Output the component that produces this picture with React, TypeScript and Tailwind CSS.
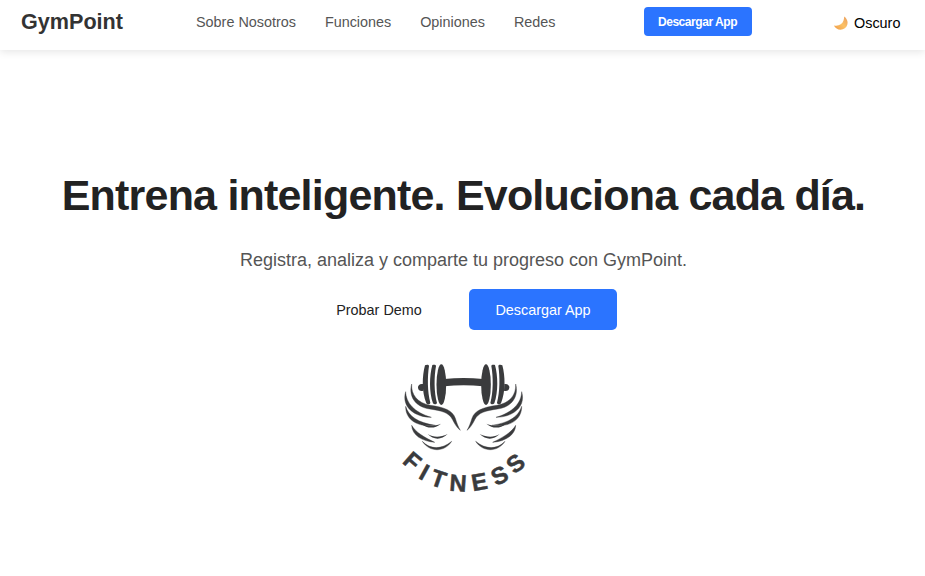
const letters = [
  { c: 'F', x: 52, y: 318, r: 41 },
  { c: 'I', x: 88, y: 351, r: 29 },
  { c: 'T', x: 131, y: 371, r: 19 },
  { c: 'N', x: 189, y: 384, r: 4 },
  { c: 'E', x: 253, y: 380, r: -10 },
  { c: 'S', x: 313, y: 361, r: -26 },
  { c: 'S', x: 361, y: 325, r: -40 },
];

function Half() {
  return (
    <g>
      <path d="M84 87C74 85 68 92 69 98C70 106 77 110 85 107Z" />
      <path d="M90 31C95 28 102 29 102 33C97 65 97 112 106 143C105 149 97 149 94 145C80 111 81 64 90 31Z" />
      <path d="M112 30C117 28 123 29 123 33C117 65 117 112 126 144C124 149 117 149 114 145C102 111 103 63 112 30Z" />
      <ellipse cx="139" cy="89" rx="14.5" ry="61" />
      <g stroke="#3a3b3d" strokeWidth="1.2" strokeLinejoin="round">
        <path d="M50 87C48 119 67 144 106 151C148 157 173 166 181 190C185 203 190 217 196 226C185 218 179 206 172 193C162 173 140 167 104 162C61 156 40 124 50 87Z" />
        <path d="M32 110C33 143 57 172 109 187C61 187 18 157 32 110Z" />
        <path d="M32 154C41 184 68 203 121 211C69 218 31 195 32 154Z" />
        <path d="M50 211C62 232 88 247 119 262C82 259 51 241 50 211Z" />
        <path d="M82 259C107 285 141 283 170 259C149 292 104 293 82 259Z" />
      </g>
      <path d="M78 206C99 214 116 214 138 206C118 222 98 221 78 206Z" />
      <path d="M98 237C116 248 135 248 158 237C138 256 116 255 98 237Z" />
    </g>
  );
}

function FitnessLogo() {
  return (
    <svg className="h-[145px] w-[140px]" viewBox="0 0 420 435" fill="#3a3b3d" role="img" aria-label="Fitness">
      <Half />
      <g transform="translate(412 0) scale(-1 1)">
        <Half />
      </g>
      <path d="M148 72Q206 66 264 72V94Q206 87 148 94Z" />
      {letters.map((l, i) => (
        <text
          key={i}
          transform={`translate(${l.x} ${l.y}) rotate(${l.r})`}
          y="25"
          textAnchor="middle"
          stroke="#3a3b3d"
          strokeWidth="1.5"
          className="font-['Liberation_Sans',sans-serif] text-[71px] font-bold"
        >
          {l.c}
        </text>
      ))}
    </svg>
  );
}

function Moon() {
  return (
    <svg className="h-4 w-4" viewBox="0 0 16 16">
      <defs>
        <linearGradient id="moon" x1="0" y1="1" x2="1" y2="0">
          <stop offset="0" stopColor="#ef9a45" />
          <stop offset=".5" stopColor="#fcc267" />
          <stop offset="1" stopColor="#e99d5f" />
        </linearGradient>
      </defs>
      <path d="M11.2 1.4C16.3 5 15.5 12.3 9.8 14.3C6.4 15.4 2.5 14 .9 10.5C5.3 11.5 9.3 9.5 10.5 5.6C10.9 4.2 11.2 2.8 11.2 1.4Z" fill="url(#moon)" />
    </svg>
  );
}

export default function App() {
  return (
    <div className="min-h-[576px] bg-white font-['Liberation_Sans',Arial,sans-serif]">
      <header className="flex h-[50px] items-start bg-white pl-[21px] shadow-[0_2px_8px_rgba(0,0,0,0.1)]">
        <div className="w-[175px] pt-[6px] text-[21.6px] leading-8 font-bold text-[#333]">GymPoint</div>
        <nav className="flex w-[448px] gap-[28.9px] pt-[11px] text-[14.4px] leading-[22px] text-[#555]">
          <a>Sobre Nosotros</a>
          <a>Funciones</a>
          <a>Opiniones</a>
          <a>Redes</a>
        </nav>
        <button className="mt-[7px] h-[29px] w-[108px] rounded bg-[#2b74ff] pr-[1px] text-xs font-bold tracking-[-0.45px] text-white">
          Descargar App
        </button>
        <button className="mt-3 ml-[81px] flex items-center gap-[5px] text-[14.4px] leading-[22px] text-black">
          <Moon />
          Oscuro
        </button>
      </header>
      <main className="flex flex-col items-center pt-[114px] pl-[2px]">
        <h1 className="text-[43px] leading-[62px] font-bold tracking-[-0.8px] whitespace-nowrap text-[#222]">
          Entrena inteligente. Evoluciona cada día.
        </h1>
        <p className="mt-5 text-[18px] leading-7 text-[#555]">
          Registra, analiza y comparte tu progreso con GymPoint.
        </p>
        <div className="mt-[15px] flex gap-[21px] pr-[1px] text-[14.4px]">
          <button className="h-[41px] w-[138px] pt-[2px] pl-[1px] text-[#222]">Probar Demo</button>
          <button className="h-[41px] w-[148px] rounded-[5px] bg-[#2b74ff] pt-[2px] pl-[1px] text-white">Descargar App</button>
        </div>
        <div className="mt-[25px] pl-[2px]">
          <FitnessLogo />
        </div>
      </main>
    </div>
  );
}
